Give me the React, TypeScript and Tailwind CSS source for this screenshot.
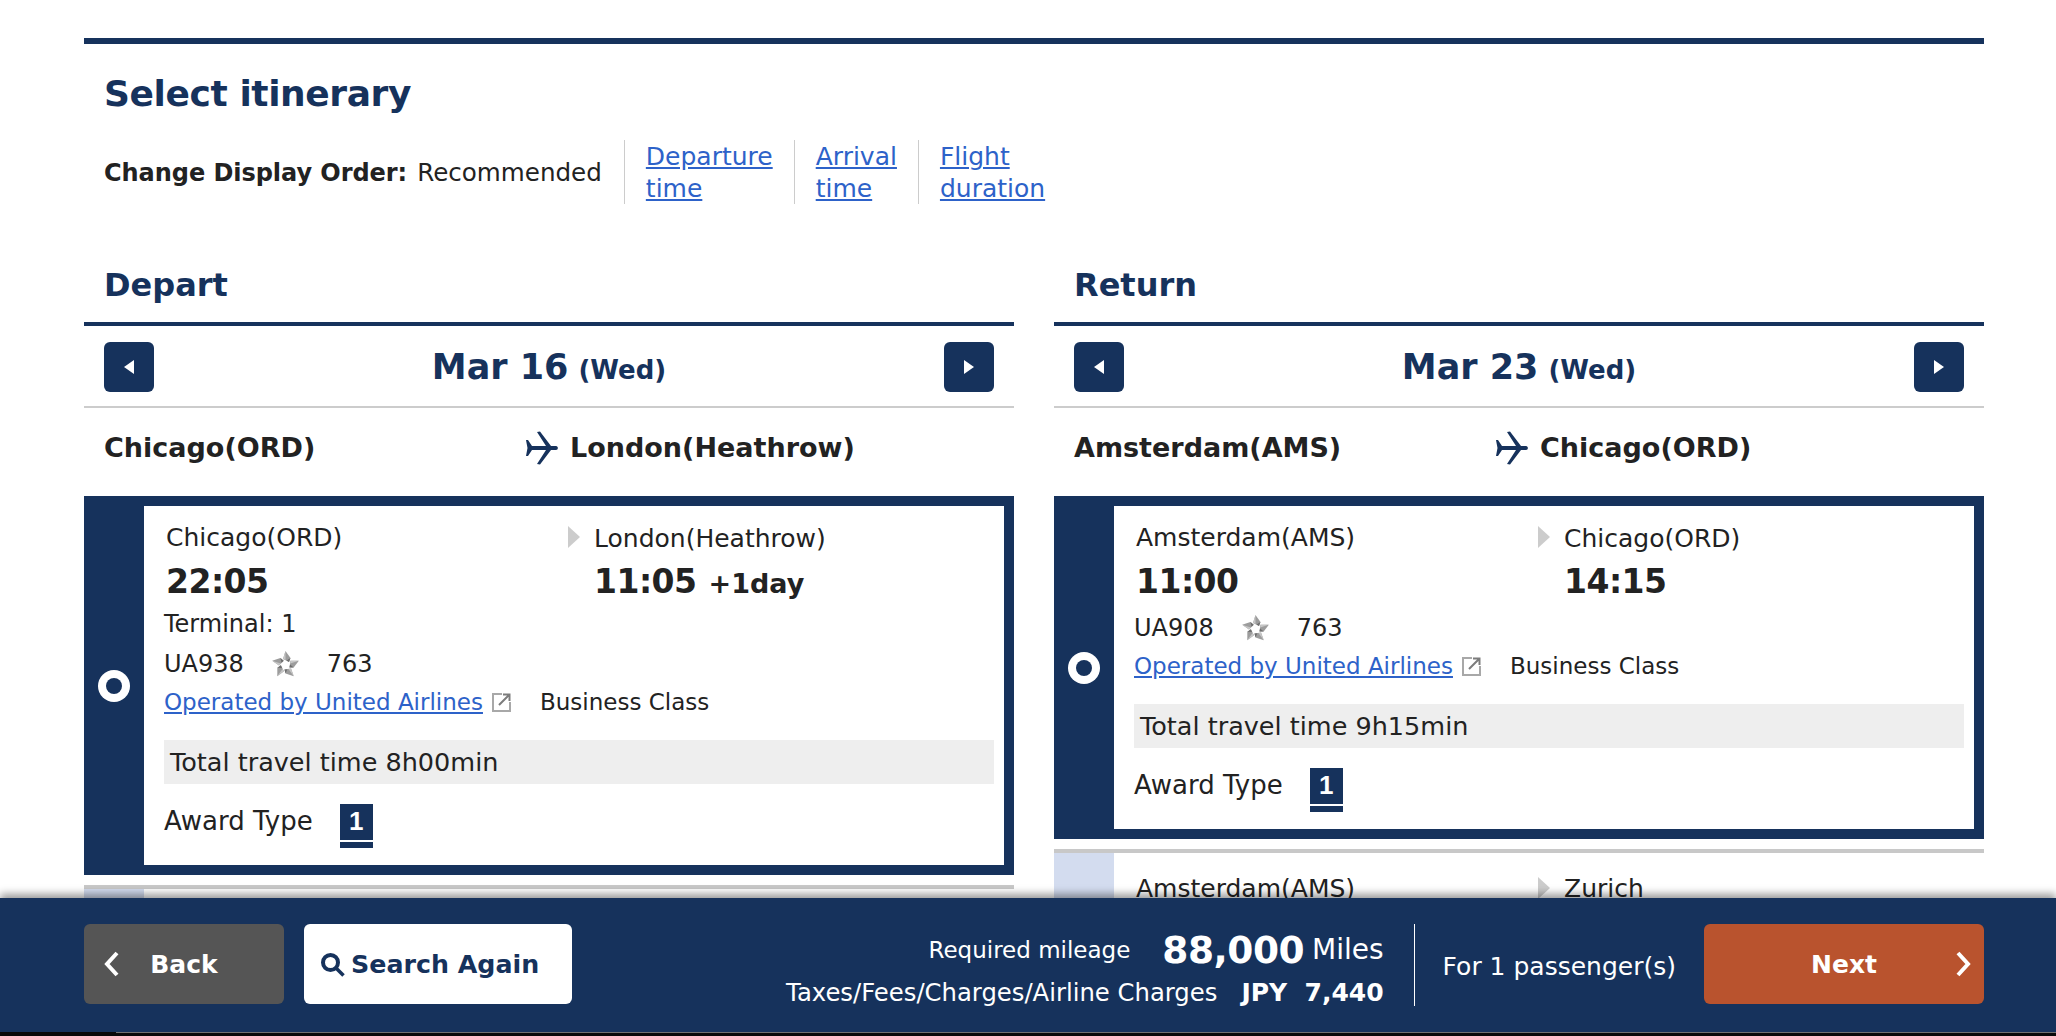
function Plane() {
  return (
    <svg width="34" height="34" viewBox="0 0 34 34" className="shrink-0 fill-[#16325c]">
      <path d="M3 15 L21 15 L12 1 L15 0.500 L26 15 L31 15 C33.500 15 33.500 19 31 19 L26 19 L15 33.500 L12 33 L21 19 L3 19 Z" />
      <path d="M1 9 L3 9 L7 15 L7 19 L3 25 L1 25 L2.500 17 Z" />
    </svg>
  );
}

function StarLogo() {
  return (
    <svg width="31" height="28" viewBox="0 0 30 28" className="shrink-0 blur-[0.5px]">
      {[0, 72, 144, 216, 288].map((deg) => (
        <g key={deg} transform={`rotate(${deg} 15 15)`}>
          <path d="M15 1 L20 8 L18.500 12 L12.500 9 Z" fill="#9c9c9c" />
          <path d="M15 1 L12.500 9 L15 10 Z" fill="#c6c6c6" />
          <path d="M20 8 L18.500 12 L16 10.500 Z" fill="#6e6e6e" />
        </g>
      ))}
    </svg>
  );
}

function ExternalIcon() {
  return (
    <svg width="21" height="21" viewBox="0 0 21 21" className="shrink-0 fill-none">
      <path d="M11 2 H2 V19 H19 V10" stroke="#a8a8a8" strokeWidth="2" />
      <path d="M8 13 L18 3 M12 2.500 H18.500 V9" stroke="#7c7c7c" strokeWidth="2" />
    </svg>
  );
}

function Triangle({ left }: { left?: boolean }) {
  return (
    <svg width="12" height="16" viewBox="0 0 12 16" className="fill-white">
      <path d={left ? "M11 1 V15 L1 8 Z" : "M1 1 V15 L11 8 Z"} />
    </svg>
  );
}

function Chevron({ left }: { left?: boolean }) {
  return (
    <svg width="17" height="26" viewBox="0 0 17 26" className="fill-none stroke-white stroke-[4]">
      <path d={left ? "M14 2 L4 13 L14 24" : "M3 2 L13 13 L3 24"} />
    </svg>
  );
}

function DateRow({ date, day }: { date: string; day: string }) {
  return (
    <div className="flex h-[82px] items-center justify-between border-b-2 border-[#cccccc] px-5 pt-0.5">
      <button className="flex h-[50px] w-[50px] items-center justify-center rounded-md bg-[#16325c]">
        <Triangle left />
      </button>
      <div className="font-bold text-[#16325c]">
        <span className="text-[35px]">{date}</span>
        <span className="ml-2.5 text-[26px]">{day}</span>
      </div>
      <button className="flex h-[50px] w-[50px] items-center justify-center rounded-md bg-[#16325c]">
        <Triangle />
      </button>
    </div>
  );
}

function Radio() {
  return (
    <span className="flex h-8 w-8 items-center justify-center rounded-full bg-white">
      <span className="h-4 w-4 rounded-full bg-[#16325c]" />
    </span>
  );
}

function Badge() {
  return (
    <span className="flex h-11 w-[33px] flex-col bg-[#16325c] text-white">
      <span className="flex h-9 items-center justify-center font-['Liberation_Sans',sans-serif] text-[26px] font-bold">1</span>
      <span className="h-0.5 bg-white" />
    </span>
  );
}

function Arrow() {
  return <span className="mt-2 mr-3.5 h-0 w-0 shrink-0 border-y-[11px] border-l-[12px] border-y-transparent border-l-[#cccccc]" />;
}

type CardProps = {
  from: string;
  to: string;
  dep: string;
  arr: string;
  plusDay?: boolean;
  terminal?: string;
  flight: string;
  total: string;
};

function SelectedCard({ from, to, dep, arr, plusDay, terminal, flight, total }: CardProps) {
  return (
    <div className="flex bg-[#16325c] pt-2.5 pr-2.5 pb-2.5">
      <div className="flex w-[60px] shrink-0 items-center justify-center">
        <Radio />
      </div>
      <div className="flex-1 bg-white pt-3 pr-2.5 pb-4 pl-5 text-[25px] text-[#222222]">
        <div className="flex">
          <div className="w-[404px] shrink-0 pl-0.5">
            <div className="h-10 leading-[39px]">{from}</div>
            <div className="h-[48px] text-[33px] leading-[48px] font-bold tracking-[-0.5px]">{dep}</div>
          </div>
          <Arrow />
          <div>
            <div className="h-10 leading-[42px]">{to}</div>
            <div className="h-[48px] leading-[48px] font-bold">
              <span className="text-[33px] tracking-[-0.5px]">{arr}</span>
              {plusDay && <span className="ml-3 text-[27px]">+1day</span>}
            </div>
          </div>
        </div>
        {terminal && <div className="h-9 text-[24px] leading-9">{terminal}</div>}
        <div className="mt-0.5 flex h-[40px] items-center gap-[26px] text-[24px]">
          <span>{flight}</span>
          <StarLogo />
          <span>763</span>
        </div>
        <div className="flex h-[36px] items-center text-[23px]">
          <a className="text-[#2d62c9] underline">Operated by United Airlines</a>
          <span className="ml-2"><ExternalIcon /></span>
          <span className="ml-7">Business Class</span>
        </div>
        <div className="mt-5 h-11 bg-[#eeeeee] pl-1.5 text-[25.500px] leading-[44px]">{total}</div>
        <div className="mt-[18px] flex items-center gap-[27px]">
          <span className="mb-2 text-[26px]">Award Type</span>
          <Badge />
        </div>
      </div>
    </div>
  );
}

function NextCard({ from, to }: { from: string; to: string }) {
  return (
    <div className="mt-2.5 flex border-t-4 border-[#c8c8c8]">
      <div className="w-[60px] shrink-0 bg-[#d3dcef]" />
      <div className="flex flex-1 pt-4 pl-5 text-[25px] leading-10 text-[#222222]">
        <div className="w-[404px] shrink-0 pl-0.5">{from}</div>
        <Arrow />
        <div>{to}</div>
      </div>
    </div>
  );
}

function Column(props: CardProps & { title: string; date: string; day: string; nextTo: string }) {
  return (
    <section className="w-[930px]">
      <h2 className="h-[64px] border-b-4 border-[#16325c] pl-5 text-[32px] leading-[46px] font-bold text-[#16325c]">
        {props.title}
      </h2>
      <DateRow date={props.date} day={props.day} />
      <div className="flex h-[88px] items-center pb-2 pl-5 text-[27px] font-bold text-[#222222]">
        <div className="w-[421px] shrink-0">{props.from}</div>
        <Plane />
        <div className="ml-[11px]">{props.to}</div>
      </div>
      <SelectedCard {...props} />
      <NextCard from={props.from} to={props.nextTo} />
    </section>
  );
}

export default function App() {
  return (
    <div className="flex h-screen flex-col overflow-hidden bg-black font-['DejaVu_Sans','Liberation_Sans',sans-serif]">
      <main className="min-h-0 flex-1 overflow-hidden bg-white pt-[38px] pr-[72px] pl-[84px]">
        <div className="border-t-[6px] border-[#16325c] px-5 pt-[26px]">
          <h1 className="h-[50px] text-[36px] leading-[48px] font-bold tracking-[-0.4px] text-[#16325c]">Select itinerary</h1>
          <div className="mt-[20px] flex h-16 items-center text-[25px] text-[#222222]">
            <span className="pt-0.5 text-[24px] font-bold tracking-[-0.05px]">Change Display Order:</span>
            <span className="ml-2.5 pt-0.5 text-[24.600px]">Recommended</span>
            <div className="ml-[22px] flex h-16 items-center border-l border-[#cccccc] px-[21px] pt-0.5 leading-8 text-[#2d62c9] underline">
              Departure<br />time
            </div>
            <div className="flex h-16 items-center border-l border-[#cccccc] px-[21px] pt-0.5 leading-8 text-[#2d62c9] underline">
              Arrival<br />time
            </div>
            <div className="flex h-16 items-center border-l border-[#cccccc] px-[21px] pt-0.5 leading-8 text-[#2d62c9] underline">
              Flight<br />duration
            </div>
          </div>
        </div>
        <div className="mt-[58px] flex gap-10">
          <Column
            title="Depart"
            date="Mar 16"
            day="(Wed)"
            from="Chicago(ORD)"
            to="London(Heathrow)"
            dep="22:05"
            arr="11:05"
            plusDay
            terminal="Terminal: 1"
            flight="UA938"
            total="Total travel time 8h00min"
            nextTo="London(Heathrow)"
          />
          <Column
            title="Return"
            date="Mar 23"
            day="(Wed)"
            from="Amsterdam(AMS)"
            to="Chicago(ORD)"
            dep="11:00"
            arr="14:15"
            flight="UA908"
            total="Total travel time 9h15min"
            nextTo="Zurich"
          />
        </div>
      </main>
      <footer className="relative z-10 flex h-[134px] shrink-0 items-start bg-[#16325c] pt-[26px] pr-[72px] pl-[84px] text-white shadow-[0_-4px_8px_rgba(0,0,0,0.4)]">
        <button className="grid h-20 w-[200px] grid-cols-[1fr_auto_1fr] items-center rounded-md bg-[#555555] px-[19px] text-[25px] font-bold">
          <span className="justify-self-start"><Chevron left /></span>
          <span className="pt-0.5">Back</span>
          <span />
        </button>
        <button className="ml-5 flex h-20 w-[268px] items-center gap-1.5 rounded-md bg-white pl-4 text-[25.300px] font-bold text-[#16325c]">
          <svg width="25" height="25" viewBox="0 0 25 25" className="fill-none stroke-[#16325c]">
            <circle cx="10.500" cy="10.500" r="7.500" strokeWidth="4" />
            <path d="M16 16 L23.500 23.500" strokeWidth="3.500" />
          </svg>
          <span className="pt-0.5">Search Again</span>
        </button>
        <div className="flex h-[82px] flex-1 flex-col items-end pt-0.5">
          <div className="flex h-[48px] items-center">
            <span className="text-[23px]">Required mileage</span>
            <span className="ml-8 text-[37.500px] font-bold tracking-[-0.5px]">88,000</span>
            <span className="ml-2 text-[28px]">Miles</span>
          </div>
          <div className="flex h-[40px] items-center text-[24.300px]">
            <span>Taxes/Fees/Charges/Airline Charges</span>
            <span className="ml-6 text-[25px] font-bold">JPY&nbsp;&nbsp;7,440</span>
          </div>
        </div>
        <div className="ml-[30px] flex h-[82px] items-center border-l border-white pt-1 pl-7 text-[25px]">For 1 passenger(s)</div>
        <button className="ml-7 grid h-20 w-[280px] grid-cols-[1fr_auto_1fr] items-center rounded-md bg-[#b9532e] px-[12px] text-[25px] font-bold">
          <span />
          <span className="pt-0.5">Next</span>
          <span className="justify-self-end"><Chevron /></span>
        </button>
      </footer>
      <div className="flex h-1 shrink-0 bg-[#0a0a0a]">
        <div className="w-[116px]" />
        <div className="flex-1 border-t border-[#777777]" />
      </div>
    </div>
  );
}
